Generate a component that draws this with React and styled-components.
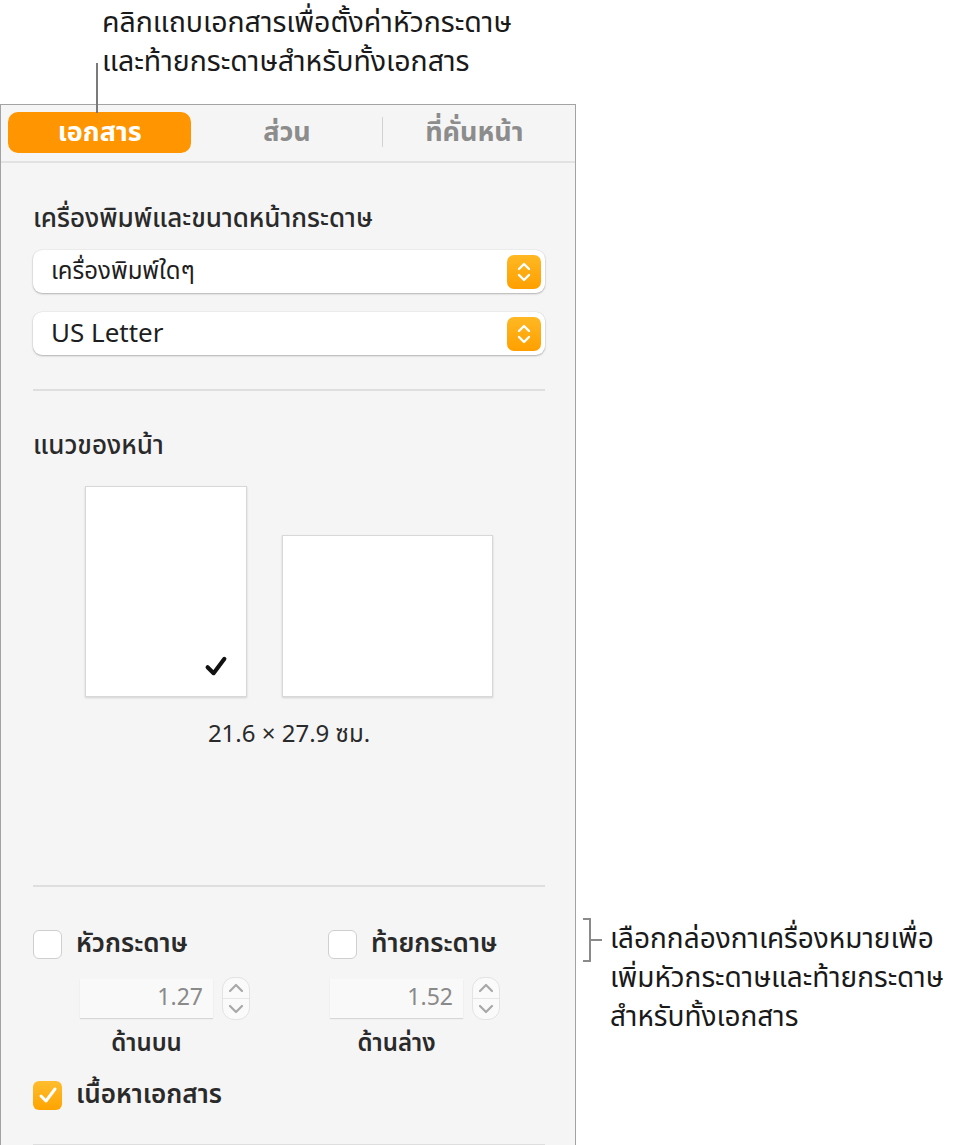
import React from 'react';
import styled, { createGlobalStyle } from 'styled-components';

const GlobalStyle = createGlobalStyle`
  html, body {
    margin: 0;
    padding: 0;
    background: #ffffff;
  }
  body {
    font-family: "Noto Sans Thai", "Noto Sans Thai Looped", "Noto Sans", sans-serif;
    color: #222;
  }
`;

const Page = styled.div`
  display: flex;
  width: 964px;
  height: 1145px;
  overflow: hidden;
`;

const LeftColumn = styled.div`
  display: flex;
  flex-direction: column;
  width: 576px;
  flex-shrink: 0;
`;

const CalloutRow = styled.div`
  display: flex;
  height: 104px;
`;

const Leader = styled.div`
  position: relative;
  z-index: 2;
  width: 2px;
  height: 50px;
  margin: 63px 0 0 96px;
  background: #7a7a7a;
  flex-shrink: 0;
`;

const CalloutText = styled.div`
  margin-left: 4px;
  padding-top: 4px;
  font-size: 28.5px;
  line-height: 39px;
  color: #1a1a1a;
  white-space: nowrap;
`;

const Panel = styled.div`
  box-sizing: border-box;
  flex: 1;
  background: #f5f5f5;
  border: 1.5px solid #a3a3a3;
  border-bottom: none;
`;

const TabBar = styled.div`
  display: grid;
  grid-template-columns: repeat(3, 1fr);
  padding: 7px 6px 0;
  box-sizing: border-box;
  border-bottom: 2px solid #e2e2e2;
  height: 58px;
`;

const Tab = styled.div`
  position: relative;
  display: flex;
  align-items: center;
  justify-content: center;
  height: 41px;
  margin: 0 3px 0 1px;
  border-radius: 10px;
  font-size: 27px;
  font-weight: 700;
  color: ${p => (p.$active ? '#ffffff' : '#8c8c8c')};
  background: ${p => (p.$active ? '#ff9500' : 'transparent')};

  ${p => p.$divided && `
    &::before {
      content: '';
      position: absolute;
      left: -1px;
      top: 5px;
      height: 30px;
      width: 1px;
      background: #d2d2d2;
    }
  `}
`;

const Content = styled.div`
  padding: 0 30px 0 32px;
`;

const SectionTitle = styled.div`
  font-size: 26px;
  line-height: 32px;
  font-weight: 500;
  color: #2a2a2a;
  margin-top: ${p => p.$top}px;
`;

const Select = styled.div`
  display: flex;
  align-items: center;
  justify-content: space-between;
  height: 43px;
  margin-top: ${p => p.$top}px;
  padding: 0 4px 0 18px;
  background: #ffffff;
  border-radius: 9px;
  box-shadow: 0 1px 2px rgba(0, 0, 0, 0.25), 0 0 0 0.5px rgba(0, 0, 0, 0.06);
  font-size: ${p => p.$size}px;
  color: #1e1e1e;
`;

const SelectButton = styled.div`
  display: flex;
  align-items: center;
  justify-content: center;
  width: 34px;
  height: 34px;
  border-radius: 7px;
  background: linear-gradient(#ffb823, #ff9f00);
`;

const Divider = styled.div`
  height: 2px;
  background: #dedede;
  margin-top: ${p => p.$top}px;
`;

const Orientation = styled.div`
  display: flex;
  justify-content: center;
  align-items: flex-end;
  gap: 35px;
  margin-top: 24px;
`;

const Sheet = styled.div`
  box-sizing: border-box;
  display: flex;
  align-items: flex-end;
  justify-content: flex-end;
  padding: 18px;
  width: ${p => p.$w}px;
  height: ${p => p.$h}px;
  background: #ffffff;
  border: 1px solid #d8d8d8;
  box-shadow: 0 1px 2px rgba(0, 0, 0, 0.15);
`;

const Dimensions = styled.div`
  text-align: center;
  font-size: 24px;
  line-height: 30px;
  color: #2a2a2a;
  margin-top: 23px;
`;

const Options = styled.div`
  display: grid;
  grid-template-columns: 295px 1fr;
  margin-top: 42px;
`;

const OptionColumn = styled.div`
  display: flex;
  flex-direction: column;
`;

const CheckRow = styled.label`
  display: flex;
  align-items: center;
  gap: 14px;
  height: 30px;
  margin-top: ${p => p.$top || 0}px;
  font-size: 26px;
  font-weight: 600;
  color: #2a2a2a;
  white-space: nowrap;
`;

const Box = styled.span`
  box-sizing: border-box;
  display: flex;
  align-items: center;
  justify-content: center;
  width: 29px;
  height: 29px;
  flex-shrink: 0;
  border-radius: 6px;
  background: ${p => (p.$checked ? 'linear-gradient(#ffbd2e, #ffa300)' : '#ffffff')};
  border: ${p => (p.$checked ? 'none' : '1px solid #cfcfcf')};
`;

const FieldRow = styled.div`
  display: flex;
  align-items: center;
  gap: 9px;
  margin: 18px 0 0 ${p => p.$indent}px;
`;

const NumberField = styled.div`
  box-sizing: border-box;
  width: 133px;
  height: 39px;
  padding-right: 10px;
  background: #f9f9f9;
  box-shadow: 0 1px 1px rgba(0, 0, 0, 0.12);
  font-size: 23px;
  line-height: 39px;
  text-align: right;
  color: #8a8a8a;
`;

const Stepper = styled.div`
  box-sizing: border-box;
  display: flex;
  flex-direction: column;
  width: 28px;
  height: 43px;
  border: 1px solid #e3e3e3;
  border-radius: 12px;
  background: #fafafa;
`;

const StepHalf = styled.div`
  flex: 1;
  display: flex;
  align-items: center;
  justify-content: center;
  & + & {
    border-top: 1px solid #e6e6e6;
  }
`;

const FieldCaption = styled.div`
  width: 133px;
  margin: 11px 0 0 ${p => p.$indent}px;
  text-align: center;
  font-size: 24px;
  line-height: 26px;
  font-weight: 600;
  color: #2a2a2a;
  white-space: nowrap;
`;

const SideNote = styled.div`
  display: flex;
  align-items: flex-start;
  margin: 918px 0 0 7px;
`;

const Bracket = styled.div`
  box-sizing: border-box;
  width: 8px;
  height: 44px;
  border: 2px solid #8a8a8a;
  border-left: none;
  flex-shrink: 0;
`;

const Tick = styled.div`
  width: 11px;
  height: 2px;
  margin-top: 21px;
  background: #8a8a8a;
  flex-shrink: 0;
`;

const SideText = styled.div`
  margin-left: 8px;
  padding-top: 2px;
  font-size: 28px;
  line-height: 39px;
  color: #1a1a1a;
  white-space: nowrap;
`;

const UpDown = ({ color, size = 18, width = 2.4 }) => (
  <svg width={size} height={size + 6} viewBox="0 0 18 24" fill="none">
    <polyline points="4,9 9,4 14,9" stroke={color} strokeWidth={width} strokeLinecap="round" strokeLinejoin="round" />
    <polyline points="4,15 9,20 14,15" stroke={color} strokeWidth={width} strokeLinecap="round" strokeLinejoin="round" />
  </svg>
);

const Chevron = ({ up }) => (
  <svg width="16" height="10" viewBox="0 0 16 10" fill="none">
    <polyline
      points={up ? '2,8 8,2 14,8' : '2,2 8,8 14,2'}
      stroke="#a8a8a8"
      strokeWidth="2.2"
      strokeLinecap="round"
      strokeLinejoin="round"
    />
  </svg>
);

const CheckMark = ({ color = '#fff', size = 20, w = 3 }) => (
  <svg width={size} height={size} viewBox="0 0 20 20" fill="none">
    <polyline points="3,11 8,16 17,4" stroke={color} strokeWidth={w} strokeLinecap="round" strokeLinejoin="round" />
  </svg>
);

const MarginField = ({ value, caption, indent }) => (
  <>
    <FieldRow $indent={indent}>
      <NumberField>{value}</NumberField>
      <Stepper>
        <StepHalf><Chevron up /></StepHalf>
        <StepHalf><Chevron /></StepHalf>
      </Stepper>
    </FieldRow>
    <FieldCaption $indent={indent}>{caption}</FieldCaption>
  </>
);

export default function App() {
  return (
    <Page>
      <GlobalStyle />
      <LeftColumn>
        <CalloutRow>
          <Leader />
          <CalloutText>
            คลิกแถบเอกสารเพื่อตั้งค่าหัวกระดาษ
            <br />
            และท้ายกระดาษสำหรับทั้งเอกสาร
          </CalloutText>
        </CalloutRow>
        <Panel>
          <TabBar>
            <Tab $active>เอกสาร</Tab>
            <Tab>ส่วน</Tab>
            <Tab $divided>ที่คั่นหน้า</Tab>
          </TabBar>
          <Content>
            <SectionTitle $top={40}>เครื่องพิมพ์และขนาดหน้ากระดาษ</SectionTitle>
            <Select $top={15} $size={24}>
              เครื่องพิมพ์ใดๆ
              <SelectButton><UpDown color="#fff" /></SelectButton>
            </Select>
            <Select $top={19} $size={26}>
              US Letter
              <SelectButton><UpDown color="#fff" /></SelectButton>
            </Select>
            <Divider $top={34} />
            <SectionTitle $top={39}>แนวของหน้า</SectionTitle>
            <Orientation>
              <Sheet $w={162} $h={211}>
                <CheckMark color="#111" size={24} w={3.4} />
              </Sheet>
              <Sheet $w={211} $h={162} />
            </Orientation>
            <Dimensions>21.6 × 27.9 ซม.</Dimensions>
            <Divider $top={135} />
            <Options>
              <OptionColumn>
                <CheckRow>
                  <Box />
                  หัวกระดาษ
                </CheckRow>
                <MarginField value="1.27" caption="ด้านบน" indent={47} />
              </OptionColumn>
              <OptionColumn>
                <CheckRow>
                  <Box />
                  ท้ายกระดาษ
                </CheckRow>
                <MarginField value="1.52" caption="ด้านล่าง" indent={2} />
              </OptionColumn>
            </Options>
            <CheckRow $top={23}>
              <Box $checked><CheckMark /></Box>
              เนื้อหาเอกสาร
            </CheckRow>
            <Divider $top={34} />
          </Content>
        </Panel>
      </LeftColumn>
      <SideNote>
        <Bracket />
        <Tick />
        <SideText>
          เลือกกล่องกาเครื่องหมายเพื่อ
          <br />
          เพิ่มหัวกระดาษและท้ายกระดาษ
          <br />
          สำหรับทั้งเอกสาร
        </SideText>
      </SideNote>
    </Page>
  );
}
